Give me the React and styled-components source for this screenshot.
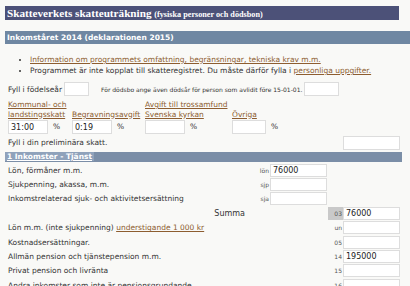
import React from "react";
import styled, {createGlobalStyle} from "styled-components";

const GlobalStyle = createGlobalStyle`
  body {
    margin: 0;
    background: #f9f9f7;
    font-family: "DejaVu Sans", Verdana, sans-serif;
    color: #333;
  }
`

const rows = [
    {label: 'Lön, förmåner m.m.', code: 'lön', value: '76000'},
    {label: 'Sjukpenning, akassa, m.m.', code: 'sjp', value: ''},
    {label: 'Inkomstrelaterad sjuk- och aktivitetsersättning', code: 'sja', value: ''},
]

const rows2 = [
    {label: 'Kostnadsersättningar.', code: '05', value: ''},
    {label: 'Allmän pension och tjänstepension m.m.', code: '14', value: '195000'},
    {label: 'Privat pension och livränta', code: '15', value: ''},
    {label: 'Andra inkomster som inte är pensionsgrundande', code: '16', value: ''},
]

const App = () => {
    return (
        <Page>
            <GlobalStyle/>
            <TitleBar>
                Skatteverkets skatteuträkning <small>(fysiska personer och dödsbon)</small>
            </TitleBar>
            <SubBar>Inkomståret 2014 (deklarationen 2015)</SubBar>

            <InfoList>
                <li><Link>Information om programmets omfattning, begränsningar, tekniska krav m.m.</Link></li>
                <li>Programmet är inte kopplat till skatteregistret. Du måste därför fylla i <Link>personliga uppgifter.</Link></li>
            </InfoList>

            <BirthRow>
                <span>Fyll i födelseår</span>
                <Field $w={25}/>
                <Note>För dödsbo ange även dödsår för person som avlidit före 15-01-01.</Note>
                <Field $w={35}/>
            </BirthRow>

            <Rates>
                <RateLabel><Link>Kommunal- och<br/>landstingsskatt</Link></RateLabel>
                <RateLabel><Link>Begravningsavgift</Link></RateLabel>
                <RateLabel><Link>Avgift till trossamfund<br/>Svenska kyrkan</Link></RateLabel>
                <RateLabel><Link>Övriga</Link></RateLabel>
                <RateCell><Field $w={40} defaultValue="31:00"/><Pct>%</Pct></RateCell>
                <RateCell><Field $w={40} defaultValue="0:19"/><Pct>%</Pct></RateCell>
                <RateCell><Field $w={40}/><Pct>%</Pct></RateCell>
                <RateCell><Field $w={34}/><Pct>%</Pct></RateCell>
            </Rates>

            <PrelRow>
                <span>Fyll i din preliminära skatt.</span>
                <Field $w={57}/>
            </PrelRow>

            <SectionBar><span>1 Inkomster - Tjänst</span></SectionBar>

            <Grid>
                {rows.map(r => (
                    <React.Fragment key={r.code}>
                        <Label>{r.label}</Label>
                        <Code>{r.code}</Code>
                        <Cell $w={57} defaultValue={r.value}/>
                        <span/>
                        <span/>
                    </React.Fragment>
                ))}
                <Summa>Summa</Summa>
                <span/>
                <span/>
                <Code $box>03</Code>
                <Cell $w={57} defaultValue="76000"/>

                <Label>Lön m.m. (inte sjukpenning) <Link>understigande 1 000 kr</Link></Label>
                <span/>
                <span/>
                <Code>un</Code>
                <Cell $w={57}/>
                {rows2.map(r => (
                    <React.Fragment key={r.code}>
                        <Label>{r.label}</Label>
                        <span/>
                        <span/>
                        <Code>{r.code}</Code>
                        <Cell $w={57} defaultValue={r.value}/>
                    </React.Fragment>
                ))}
            </Grid>
        </Page>
    )
}

const Page = styled.div`
  padding: 6px 0 0 5px;
  font-size: 7.5px;
  overflow: hidden;
  height: 280px;
`

const TitleBar = styled.div`
  height: 14px;
  margin-right: 11px;
  background: #4c5178;
  color: #fff;
  font-family: "Liberation Serif", "Times New Roman", serif;
  font-weight: bold;
  font-size: 11.2px;
  line-height: 14px;
  padding-left: 2px;
  white-space: nowrap;

  small {
    font-size: 8.2px;
  }
`

const SubBar = styled.div`
  height: 13px;
  margin-top: 11px;
  background: #6f87a2;
  color: #fff;
  font-weight: bold;
  font-size: 7.5px;
  line-height: 13px;
  padding-left: 2px;
`

const InfoList = styled.ul`
  margin: 10px 0 0;
  padding-left: 25px;
  line-height: 11px;
`

const Link = styled.a`
  color: #8d5d30;
  text-decoration: underline;
  cursor: pointer;
`

const Field = styled.input`
  box-sizing: border-box;
  width: ${p => p.$w}px;
  height: 14px;
  border: 1px solid #ddd;
  background: #fff;
  font: inherit;
  font-size: 8px;
  color: #222;
  padding: 0 2px;
  outline: 0;
`

const BirthRow = styled.div`
  display: flex;
  align-items: center;
  margin-top: 4px;
  padding-left: 3px;
  height: 18px;

  > span {
    margin-right: 2px;
  }
`

const Note = styled.span`
  font-size: 6px;
  margin: 0 3px 0 12px;
`

const Rates = styled.div`
  display: grid;
  grid-template-columns: 64px 73px 87px auto;
  align-items: end;
  margin-top: 2px;
  padding-left: 3px;
  line-height: 9.5px;
`

const RateLabel = styled.div`
  white-space: nowrap;
`

const RateCell = styled.div`
  display: flex;
  align-items: center;
  margin-top: 1px;
`

const Pct = styled.span`
  margin-left: 5px;
`

const PrelRow = styled.div`
  display: flex;
  justify-content: space-between;
  align-items: center;
  margin-top: 1px;
  padding: 0 10px 0 3px;
  height: 15px;
`

const SectionBar = styled.div`
  height: 10px;
  margin: 2px 8px 0 0;
  background: #7b8ea7;
  font-weight: bold;
  font-size: 7.5px;
  line-height: 10px;

  span {
    background: #8fa2bb;
    color: #fff;
    padding: 0 2px;
    text-decoration: underline;
  }
`

const Grid = styled.div`
  display: grid;
  grid-template-columns: 1fr 13px 58px 15px 57px;
  grid-auto-rows: 14.4px;
  align-items: center;
  padding: 1px 10px 0 3px;
`

const Label = styled.div`
  white-space: nowrap;
`

const Summa = styled.div`
  justify-self: end;
  margin-right: 12px;
  font-size: 8px;
`

const Code = styled.div`
  font-size: 6px;
  color: #555;
  height: 13px;
  line-height: 13px;
  text-align: right;
  padding-right: 1px;
  background: ${p => p.$box ? '#c9c9c9' : 'transparent'};
`

const Cell = styled(Field)`
  height: 13px;
`

export default App
